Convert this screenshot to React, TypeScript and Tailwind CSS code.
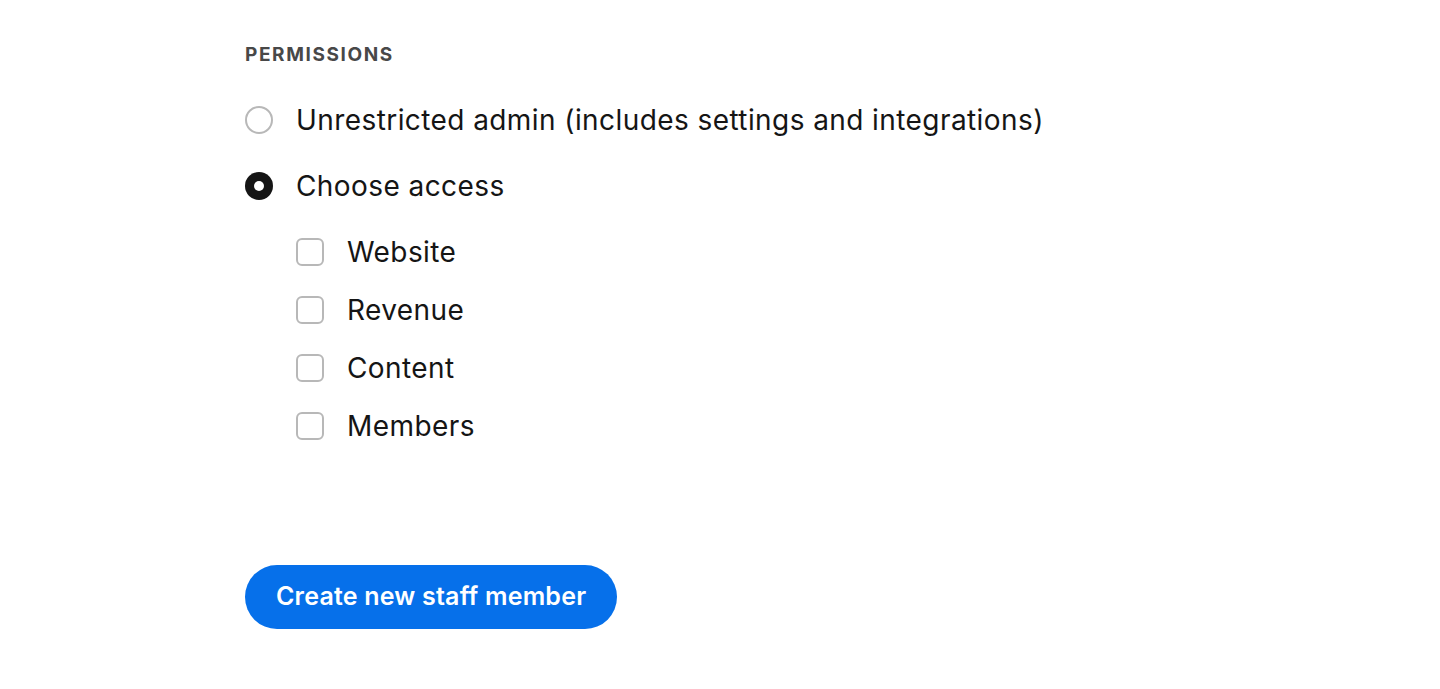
import { useState } from 'react';

const accessOptions = ['Website', 'Revenue', 'Content', 'Members'];

export default function App() {
  const [mode, setMode] = useState<'admin' | 'choose'>('choose');
  const [checked, setChecked] = useState<Record<string, boolean>>({});

  return (
    <div
      className="min-h-screen bg-white pl-[245px] pt-[42px] text-[#151515]"
      style={{ fontFamily: 'Inter, "Noto Sans", sans-serif' }}
    >
      <h2 className="text-[19px] font-bold uppercase leading-[26px] tracking-[0.085em] text-[#484848]">
        Permissions
      </h2>

      <div className="mt-[34px] flex flex-col gap-[30px]">
        <Radio
          label="Unrestricted admin (includes settings and integrations)"
          checked={mode === 'admin'}
          onClick={() => setMode('admin')}
        />
        <Radio label="Choose access" checked={mode === 'choose'} onClick={() => setMode('choose')} />
      </div>

      {/* Sub-options */}
      <div className="ml-[51px] mt-[30px] flex flex-col gap-[22px]">
        {accessOptions.map((opt) => (
          <label key={opt} className="flex h-[36px] cursor-pointer items-center gap-[23px]">
            <input
              type="checkbox"
              className="sr-only"
              checked={!!checked[opt]}
              onChange={() => setChecked((c) => ({ ...c, [opt]: !c[opt] }))}
            />
            <span className="h-[28px] w-[28px] rounded-[6px] border-2 border-[#b8b8b8] bg-white" />
            <span className="text-[28px] leading-[36px] tracking-[0.015em]">{opt}</span>
          </label>
        ))}
      </div>

      <button className="mt-[121px] h-[64px] rounded-full bg-[#0670ea] px-[31px] text-[25px] font-semibold tracking-[0.008em] text-white">
        Create new staff member
      </button>
    </div>
  );
}

function Radio({ label, checked, onClick }: { label: string; checked: boolean; onClick: () => void }) {
  return (
    <button type="button" onClick={onClick} className="flex h-[36px] items-center gap-[23px] text-left">
      {checked ? (
        <span className="flex h-[28px] w-[28px] items-center justify-center rounded-full bg-[#151515]">
          <span className="h-[10px] w-[10px] rounded-full bg-white" />
        </span>
      ) : (
        <span className="h-[28px] w-[28px] rounded-full border-2 border-[#b8b8b8]" />
      )}
      <span className="text-[28px] leading-[36px] tracking-[0.015em]">{label}</span>
    </button>
  );
}
